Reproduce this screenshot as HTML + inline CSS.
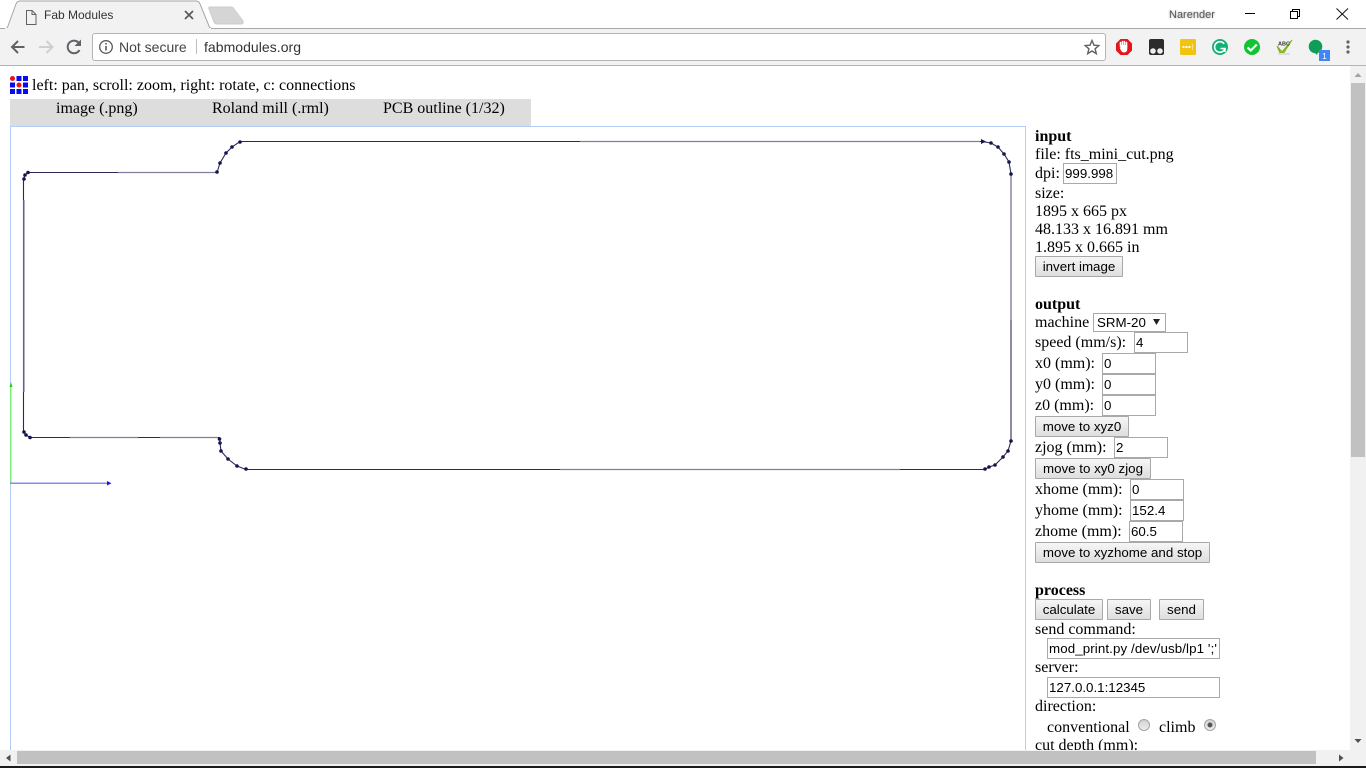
<!DOCTYPE html>
<html><head><meta charset="utf-8"><title>Fab Modules</title>
<style>
html,body{margin:0;padding:0;width:1366px;height:768px;overflow:hidden;background:#fff}
body{position:relative;font-family:"Liberation Serif",serif;font-size:16px;color:#000}
.t{position:absolute;line-height:18px;white-space:nowrap;margin-top:1px}
.s{font-family:"Liberation Sans",sans-serif;margin-top:0}
.i{position:absolute;box-sizing:border-box;height:21px;width:54px;border:1px solid #a9a9a9;background:#fff;font:13.33px/19px "Liberation Sans",sans-serif;padding-left:1px;white-space:nowrap;overflow:hidden}
.b{position:absolute;box-sizing:border-box;height:21px;border:1px solid #a9a9a9;border-radius:1px;background:linear-gradient(#f6f6f6,#dedede);font:13.33px/19px "Liberation Sans",sans-serif;text-align:center;white-space:nowrap}
.r{position:absolute}
</style></head><body>

<!-- browser chrome -->
<svg class="r" style="left:0;top:0" width="1366" height="66" viewBox="0 0 1366 66">
<rect x="0" y="28" width="1366" height="37" fill="#f2f2f2"/>
<rect x="0" y="28" width="1366" height="1" fill="#a9a9a9"/>
<rect x="0" y="65" width="1366" height="1" fill="#b4b4b4"/>
<path d="M0 28.500H5Q7 28.500 8 26L16 4Q17 1 20 1H196Q199 1 200 4L209 26Q210 28.500 212 28.500" fill="#f2f2f2" stroke="#a6a6a6"/>
<rect x="5" y="28" width="206" height="2" fill="#f2f2f2"/>
<path d="M210 7H231Q233 7 234 9L243 21Q244 24 241 24H217Q215 24 214 22L209 9Q208 7 210 7Z" fill="#d5d5d5" stroke="#cdcdcd"/>
<!-- page icon -->
<path d="M26.500 10.500H32L36 14.500V24.500H26.500Z M32 10.500V14.500H36" fill="none" stroke="#5f6368" stroke-width="1"/>
<!-- tab close -->
<path d="M185 11L193 19M193 11L185 19" stroke="#5a5a5a" stroke-width="1.700"/>
<!-- back -->
<path d="M24.500 47H12.500M18 41L12 47L18 53" fill="none" stroke="#5f6368" stroke-width="2"/>
<path d="M39 47H52M46.500 41L52.500 47L46.500 53" fill="none" stroke="#cfcfcf" stroke-width="2"/>
<!-- reload -->
<path d="M79.500 50A6.300 6.300 0 1 1 79.800 44.500" fill="none" stroke="#5f6368" stroke-width="2"/>
<path d="M81 39.500V46H74.500Z" fill="#5f6368"/>
<!-- omnibox -->
<rect x="92.500" y="33.500" width="1013" height="27" rx="2.500" fill="#fff" stroke="#b5b5b5"/>
<circle cx="106" cy="47" r="6.300" fill="none" stroke="#5a5a5a" stroke-width="1.300"/>
<rect x="105.200" y="46" width="1.600" height="4.500" fill="#5a5a5a"/><rect x="105.200" y="43" width="1.600" height="1.600" fill="#5a5a5a"/>
<rect x="196" y="39" width="1" height="15" fill="#bdbdbd"/>
<!-- star -->
<path d="M1092 40.500L1094 45.200L1098.800 45.600L1095.100 48.800L1096.300 53.600L1092 51L1087.700 53.600L1088.900 48.800L1085.200 45.600L1090 45.200Z" fill="none" stroke="#5f6368" stroke-width="1.400"/>
<!-- adblock -->
<path d="M1120.500 39H1127.500L1132 43.500V50.500L1127.500 55H1120.500L1116 50.500V43.500Z" fill="#e8141c"/>
<path d="M1120.500 46V42.500M1122.500 46V41.500M1124.500 46V41.500M1126.500 46.500V42.500" stroke="#fff" stroke-width="1.600" stroke-linecap="round"/>
<path d="M1119.500 47.500L1121 50.500Q1122 52.500 1124 52.500Q1127.300 52.500 1127.300 49V45H1120.300V48Z" fill="#fff"/>
<!-- tampermonkey -->
<rect x="1149" y="39" width="15" height="16" rx="2" fill="#2b2b2b"/>
<circle cx="1153" cy="51" r="2.800" fill="#eee"/><circle cx="1160" cy="51" r="2.800" fill="#eee"/>
<!-- yellow -->
<rect x="1180" y="39" width="16" height="16" rx="1.500" fill="#f1c40f"/>
<rect x="1182.500" y="46" width="2" height="2" fill="#fff"/><rect x="1185.500" y="46" width="2" height="2" fill="#fff"/><rect x="1188.500" y="46" width="2" height="2" fill="#fff"/><rect x="1192" y="44" width="1" height="6" fill="#fbe38a"/>
<!-- grammarly -->
<circle cx="1220" cy="47" r="8" fill="#15b076"/>
<path d="M1224.200 43.800A5.300 5.300 0 1 0 1225 48.500H1220.500" fill="none" stroke="#fff" stroke-width="1.600"/>
<path d="M1225 48V52" stroke="#fff" stroke-width="1.500"/>
<!-- green check -->
<circle cx="1252" cy="47" r="8" fill="#12c332"/>
<path d="M1247.500 47.500L1250.800 50.500L1256.800 44.500" fill="none" stroke="#fff" stroke-width="2.200"/>
<!-- abc check -->
<path d="M1277 46L1282 52L1292 40L1283 54L1280 53Z" fill="#8ac220" stroke="#7fb31b" stroke-width="1"/>
<rect x="1278" y="53" width="12" height="2" fill="#ddd"/>
<text x="1278" y="45.500" font-family="Liberation Sans,sans-serif" font-size="5.500" font-weight="bold" fill="#333">ABC</text>
<!-- bubble -->
<circle cx="1315.500" cy="46.500" r="6.800" fill="#0f9d58"/>
<path d="M1314 52L1318 52L1317 55Z" fill="#0f9d58"/>
<rect x="1319" y="50" width="11" height="11" fill="#4285f4"/>
<text x="1324.500" y="59" text-anchor="middle" font-family="Liberation Sans,sans-serif" font-size="8.500" fill="#fff">1</text>
<!-- menu -->
<circle cx="1348" cy="42" r="1.600" fill="#5f6368"/><circle cx="1348" cy="47" r="1.600" fill="#5f6368"/><circle cx="1348" cy="52" r="1.600" fill="#5f6368"/>
<!-- window controls -->
<rect x="1245" y="13" width="10" height="1" fill="#000"/>
<path d="M1290.500 11.500V18.500H1297.500V11.500ZM1292.500 11.500V9.500H1299.500V16.500H1297.500" fill="none" stroke="#000"/>
<path d="M1336.500 8.500L1348 19.500M1348 8.500L1336.500 19.500" stroke="#111" stroke-width="1"/>
</svg>
<div class="t s" style="left:44px;top:6px;font-size:12px;color:#333">Fab Modules</div>
<div class="t s" style="left:1169px;top:6px;font-size:11px;color:#555;text-shadow:0 0 2px #aaa">Narender</div>
<div class="t s" style="left:119px;top:38px;font-size:14px;color:#444">Not secure</div>
<div class="t s" style="left:204px;top:38px;font-size:14px;letter-spacing:.04px;color:#333">fabmodules.org</div>

<!-- logo -->
<svg class="r" style="left:10px;top:76px" width="18" height="18" viewBox="0 0 18 18">
<g fill="#0a0af0">
<rect x="6.500" y="0" width="5" height="5"/><rect x="13" y="0" width="5" height="5"/>
<rect x="0" y="6.500" width="5" height="5"/><rect x="13" y="6.500" width="5" height="5"/>
<rect x="0" y="13" width="5" height="5"/><rect x="6.500" y="13" width="5" height="5"/><rect x="13" y="13" width="5" height="5"/>
</g>
<circle cx="2.500" cy="2.500" r="2.500" fill="#f01010"/><circle cx="9" cy="9" r="2.500" fill="#f01010"/>
</svg>
<div class="t" style="left:32px;top:76px">left: pan, scroll: zoom, right: rotate, c: connections</div>

<!-- tabs -->
<div class="r" style="left:10px;top:99px;width:521px;height:27px;background:#ddd"></div>
<div class="t" style="left:56px;top:99px">image (.png)</div>
<div class="t" style="left:212px;top:99px">Roland mill (.rml)</div>
<div class="t" style="left:383px;top:99px">PCB outline (1/32)</div>

<!-- canvas border -->
<div class="r" style="left:10px;top:126px;width:1016px;height:1px;background:#b4cdf8"></div>
<div class="r" style="left:10px;top:126px;width:1px;height:624px;background:#b4cdf8"></div>
<div class="r" style="left:1025px;top:126px;width:1px;height:624px;background:#b4cdf8"></div>

<!-- toolpath -->
<svg class="r" style="left:0;top:126px" width="1026" height="370" viewBox="0 126 1026 370">
<g fill="none" stroke-width="1">
<path d="M242 141.500H982L991 143L998 147L1004 154L1009 162L1011 174V441L1008 451L1003 457L995 465L989 467L985 469.500H246L237 466L228 459L221 451L220 443L219.500 437.500H30L26 435L23.500 432V179L25 175L28 172.500H217L220 163L226 153L232 147L240 141.500Z" stroke="#2a2a55" stroke-width="1.100"/>
<path d="M118 172.500H216M70 437.500H138M160 437.500H218M580 141.500H980M1011 176V320M560 469.500H900M24 200V392" stroke="#7f7fa0" stroke-width="1.300"/>
</g>
<g fill="#14144f">
<path d="M981 139L986 141.500L981 144Z"/><circle cx="991" cy="143" r="1.800"/><circle cx="998" cy="147" r="1.800"/><circle cx="1004" cy="154" r="1.800"/><circle cx="1009" cy="162" r="1.800"/><circle cx="1011" cy="174" r="1.800"/>
<circle cx="1011" cy="441" r="1.800"/><circle cx="1008" cy="451" r="1.800"/><circle cx="1003" cy="457" r="1.800"/><circle cx="995" cy="465" r="1.800"/><circle cx="989" cy="467" r="1.800"/><circle cx="985" cy="469" r="1.800"/>
<circle cx="246" cy="469" r="1.800"/><circle cx="237" cy="466" r="1.800"/><circle cx="228" cy="459" r="1.800"/><circle cx="221" cy="451" r="1.800"/><circle cx="220" cy="443" r="1.800"/><circle cx="219.500" cy="439" r="1.800"/>
<circle cx="30" cy="437.500" r="1.800"/><circle cx="26" cy="435" r="1.800"/><circle cx="24" cy="432" r="1.800"/>
<circle cx="24" cy="179" r="1.800"/><circle cx="25" cy="175" r="1.800"/><circle cx="28" cy="172.500" r="1.800"/>
<circle cx="217" cy="172" r="1.800"/><circle cx="220" cy="163" r="1.800"/><circle cx="226" cy="153" r="1.800"/><circle cx="232" cy="147" r="1.800"/><circle cx="240" cy="142" r="1.800"/>
</g>
<rect x="10" y="384" width="1.500" height="99" fill="#7af07a"/>
<path d="M9.500 387L11 382L12.500 387Z" fill="#22d022"/>
<rect x="10" y="482.500" width="100" height="1.500" fill="#8a8af4"/>
<path d="M107 481L111.500 483.300L107 485.500Z" fill="#1a1ae0"/>
</svg>

<!-- right panel -->
<div class="t" style="left:1035px;top:127px"><b>input</b></div>
<div class="t" style="left:1035px;top:145px">file: fts_mini_cut.png</div>
<div class="t" style="left:1035px;top:164px">dpi:</div>
<div class="i" style="left:1063px;top:163px">999.998</div>
<div class="t" style="left:1035px;top:184px">size:</div>
<div class="t" style="left:1035px;top:202px">1895 x 665 px</div>
<div class="t" style="left:1035px;top:220px">48.133 x 16.891 mm</div>
<div class="t" style="left:1035px;top:238px">1.895 x 0.665 in</div>
<div class="b" style="left:1035px;top:256px;width:88px">invert image</div>

<div class="t" style="left:1035px;top:295px"><b>output</b></div>
<div class="t" style="left:1035px;top:313px">machine</div>
<div class="i" style="left:1093px;top:313px;width:73px;height:19px;line-height:17px;padding-left:3px">SRM-20</div>
<svg class="r" style="left:1153px;top:319px" width="7" height="6"><path d="M0 0H7L3.500 6Z" fill="#222"/></svg>
<div class="t" style="left:1035px;top:333px">speed (mm/s):</div>
<div class="i" style="left:1134px;top:332px">4</div>
<div class="t" style="left:1035px;top:354px">x0 (mm):</div>
<div class="i" style="left:1102px;top:353px">0</div>
<div class="t" style="left:1035px;top:375px">y0 (mm):</div>
<div class="i" style="left:1102px;top:374px">0</div>
<div class="t" style="left:1035px;top:396px">z0 (mm):</div>
<div class="i" style="left:1102px;top:395px">0</div>
<div class="b" style="left:1035px;top:416px;width:94px">move to xyz0</div>
<div class="t" style="left:1035px;top:438px">zjog (mm):</div>
<div class="i" style="left:1114px;top:437px">2</div>
<div class="b" style="left:1035px;top:458px;width:116px">move to xy0 zjog</div>
<div class="t" style="left:1035px;top:480px">xhome (mm):</div>
<div class="i" style="left:1130px;top:479px">0</div>
<div class="t" style="left:1035px;top:501px">yhome (mm):</div>
<div class="i" style="left:1130px;top:500px">152.4</div>
<div class="t" style="left:1035px;top:522px">zhome (mm):</div>
<div class="i" style="left:1129px;top:521px">60.5</div>
<div class="b" style="left:1035px;top:542px;width:175px">move to xyzhome and stop</div>

<div class="t" style="left:1035px;top:581px"><b>process</b></div>
<div class="b" style="left:1035px;top:599px;width:68px">calculate</div>
<div class="b" style="left:1107px;top:599px;width:44px">save</div>
<div class="b" style="left:1159px;top:599px;width:45px">send</div>
<div class="t" style="left:1035px;top:620px">send command:</div>
<div class="i" style="left:1047px;top:638px;width:173px;letter-spacing:.1px">mod_print.py /dev/usb/lp1 ';'</div>
<div class="t" style="left:1035px;top:658px">server:</div>
<div class="i" style="left:1047px;top:677px;width:173px">127.0.0.1:12345</div>
<div class="t" style="left:1035px;top:697px">direction:</div>
<div class="t" style="left:1047px;top:718px">conventional</div>
<svg class="r" style="left:1137px;top:718px" width="82" height="15">
<defs><linearGradient id="g" x1="0" y1="0" x2="0" y2="1"><stop offset="0" stop-color="#d0d0d0"/><stop offset="1" stop-color="#f0f0f0"/></linearGradient></defs>
<circle cx="7" cy="7" r="5.500" fill="url(#g)" stroke="#a5a5a5"/>
<circle cx="73" cy="7" r="5.500" fill="url(#g)" stroke="#a5a5a5"/>
<circle cx="73" cy="7" r="2.500" fill="#555"/>
</svg>
<div class="t" style="left:1159px;top:718px">climb</div>
<div class="t" style="left:1035px;top:736px">cut depth (mm):</div>

<!-- scrollbars -->
<div class="r" style="left:1350px;top:66px;width:16px;height:684px;background:#f1f1f1"></div>
<div class="r" style="left:1351px;top:83px;width:14px;height:374px;background:#c1c1c1"></div>
<svg class="r" style="left:1350px;top:66px" width="16" height="684">
<path d="M4.500 11L8 7L11.500 11Z" fill="#a3a3a3"/>
<path d="M4.500 673L8 677L11.500 673Z" fill="#505050"/>
</svg>
<div class="r" style="left:0;top:750px;width:1366px;height:16px;background:#f1f1f1"></div>
<div class="r" style="left:17px;top:751px;width:1299px;height:13px;background:#c1c1c1"></div>
<svg class="r" style="left:0;top:750px" width="1366" height="16">
<path d="M10.500 4.500L6 8L10.500 11.500Z" fill="#505050"/>
<path d="M1339 4.500L1343.500 8L1339 11.500Z" fill="#505050"/>
</svg>
<div class="r" style="left:1350px;top:750px;width:16px;height:16px;background:#f1f1f1"></div>
<div class="r" style="left:0;top:766px;width:1366px;height:2px;background:#1a1a1a"></div>
</body></html>
